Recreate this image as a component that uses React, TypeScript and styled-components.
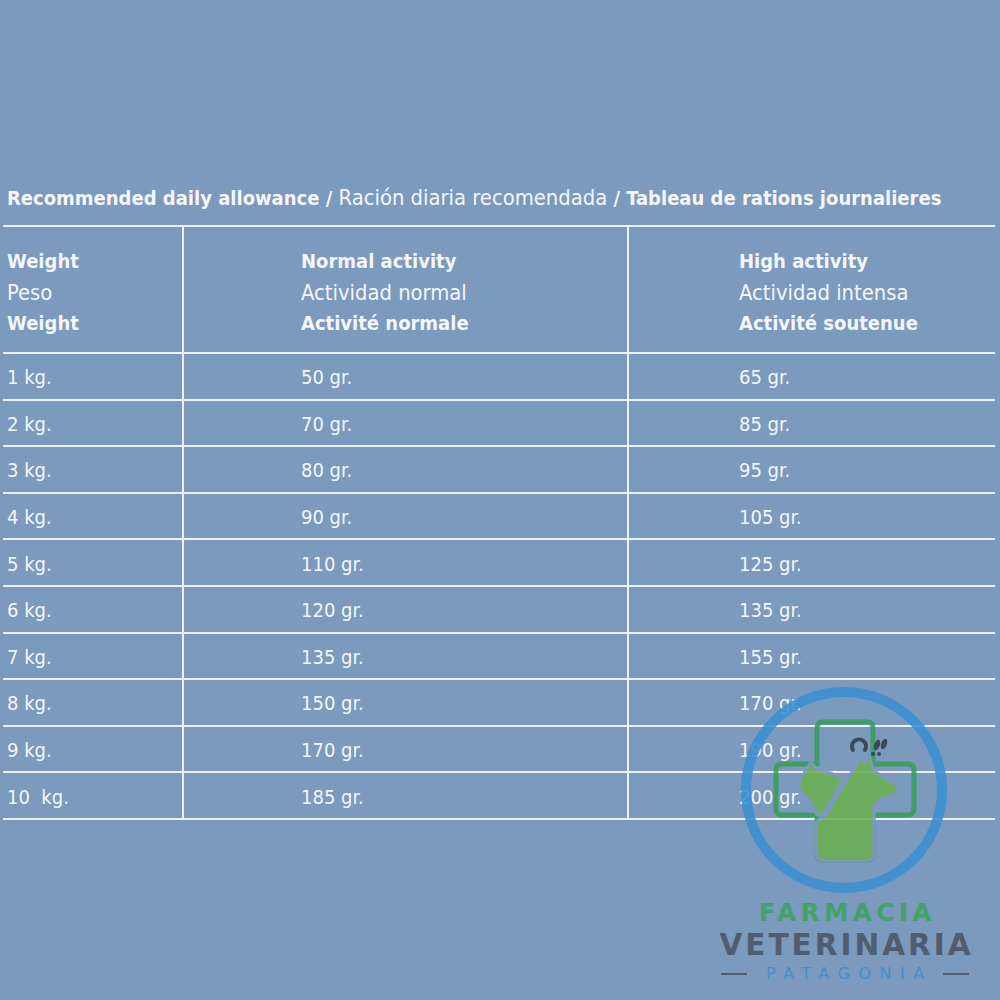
import React from 'react';
import styled, { createGlobalStyle } from 'styled-components';

const GlobalStyle = createGlobalStyle`
    html, body {
        margin: 0;
        padding: 0;
        background: #7c99be;
    }
`;

const textFont = `'Liberation Sans Narrow', 'DejaVu Sans Condensed', 'Liberation Sans', sans-serif`;
const lineColor = '#eef2f7';

const Page = styled.div`
    position: relative;
    width: 1000px;
    height: 1000px;
    box-sizing: border-box;
    padding-top: 183px;
    overflow: hidden;
    font-family: ${textFont};
    color: #f4f6f9;
`;

const Title = styled.div`
    padding-left: 7px;
    font-size: 20px;
    line-height: 30px;
    white-space: nowrap;
`;

const Strong = styled.span`
    font-weight: 700;
`;

const Light = styled.span`
    font-weight: 400;
    font-size: 21.8px;
`;

const Table = styled.div`
    display: grid;
    grid-template-columns: 181px 445px 366px;
    width: 992px;
    margin: 12px 0 0 3px;
    border-top: 2px solid ${lineColor};
`;

const Cell = styled.div<{ $pad: number; $last?: boolean; $head?: boolean }>`
    box-sizing: border-box;
    height: ${p => (p.$head ? '127px' : '46.6px')};
    padding-left: ${p => p.$pad}px;
    padding-top: ${p => (p.$head ? '19px' : '0')};
    display: flex;
    flex-direction: column;
    justify-content: ${p => (p.$head ? 'flex-start' : 'center')};
    border-bottom: 2px solid ${lineColor};
    border-right: ${p => (p.$last ? 'none' : `2px solid ${lineColor}`)};
    font-size: 20px;
    line-height: 31px;
    white-space: pre;
`;

const HeadLine = styled.span<{ $bold?: boolean }>`
    font-weight: ${p => (p.$bold ? 700 : 400)};
    font-size: ${p => (p.$bold ? '20px' : '21.8px')};
`;

const Value = styled.span`
    padding-top: 3px;
`;

const Logo = styled.div`
    position: absolute;
    left: 715px;
    top: 682px;
    width: 260px;
    display: flex;
    flex-direction: column;
    align-items: center;
    opacity: 0.88;
    font-family: 'DejaVu Sans', 'Inter', sans-serif;
    font-weight: 700;
`;

const Emblem = styled.svg`
    display: block;
    margin-left: -2px;
`;

const Farmacia = styled.div`
    margin-top: 1px;
    color: #3ba45d;
    font-size: 24.5px;
    line-height: 28px;
    letter-spacing: 4.5px;
    margin-right: -4.5px;
`;

const Veterinaria = styled.div`
    color: #4b5567;
    font-size: 29.5px;
    line-height: 37px;
    letter-spacing: 3px;
    margin-right: -3px;
    white-space: nowrap;
`;

const PatagoniaRow = styled.div`
    display: flex;
    align-items: center;
    gap: 19px;
    margin-top: -1px;
`;

const Dash = styled.span`
    width: 26px;
    height: 2px;
    background: #4b5567;
`;

const Patagonia = styled.span`
    color: #3e90d0;
    font-size: 16px;
    line-height: 22px;
    font-weight: 400;
    letter-spacing: 8.5px;
    margin-right: -8.5px;
`;

const header = [
    ['Weight', 'Peso', 'Weight'],
    ['Normal activity', 'Actividad normal', 'Activité normale'],
    ['High activity', 'Actividad intensa', 'Activité soutenue'],
];

const rows = [
    ['1 kg.', '50 gr.', '65 gr.'],
    ['2 kg.', '70 gr.', '85 gr.'],
    ['3 kg.', '80 gr.', '95 gr.'],
    ['4 kg.', '90 gr.', '105 gr.'],
    ['5 kg.', '110 gr.', '125 gr.'],
    ['6 kg.', '120 gr.', '135 gr.'],
    ['7 kg.', '135 gr.', '155 gr.'],
    ['8 kg.', '150 gr.', '170 gr.'],
    ['9 kg.', '170 gr.', '190 gr.'],
    ['10  kg.', '185 gr.', '200 gr.'],
];

const pads = [4, 117, 110];
const bg = '#7c99be';

const LogoEmblem = () => (
    <Emblem width="220" height="216" viewBox="0 0 220 216">
        <circle cx="110" cy="108" r="98" fill="none" stroke="#3b8fd1" strokeWidth="10" />
        <path
            d="M89 40 H133 Q139 40 139 46 V82 H174 Q180 82 180 88 V127 Q180 133 174 133 H139 V172 Q139 178 133 178 H89 Q83 178 83 172 V133 H48 Q42 133 42 127 V88 Q42 82 48 82 H83 V46 Q83 40 89 40 Z"
            fill="none"
            stroke="#3a9e5a"
            strokeWidth="5"
        />
        <g fill="#6cb050" stroke={bg} strokeWidth="3" strokeLinejoin="round">
            <path d="M77 80 L83 88 L97 91 L109 97 L89 133 L83 133 L77 121 L70 113 L64 105 L67 96 Z" />
            <path d="M117 91 L124 82 L126 72 L131 81 L135 72 L139 88 L151 96 L166 106 L160 113 L147 117 L140 123 L140 170 Q140 179 131 179 L91 179 Q82 179 82 170 L82 140 L91 135 Z" />
        </g>
        <path d="M119 68 A7 7 0 1 1 131 68" fill="none" stroke="#353d4a" strokeWidth="4" strokeLinecap="round" />
        <ellipse cx="143" cy="63" rx="2.8" ry="5.5" transform="rotate(20 143 63)" fill="#353d4a" />
        <ellipse cx="150" cy="62" rx="2.8" ry="5.5" transform="rotate(20 150 62)" fill="#353d4a" />
        <circle cx="139" cy="72" r="2" fill="#353d4a" />
        <circle cx="145" cy="72" r="2" fill="#353d4a" />
    </Emblem>
);

export default function App() {
    return (
        <Page>
            <GlobalStyle />
            <Title>
                <Strong>Recommended daily allowance / </Strong>
                <Light>Ración diaria recomendada </Light>
                <Strong>/ Tableau de rations journalieres</Strong>
            </Title>
            <Table>
                {header.map((lines, i) => (
                    <Cell key={`h${i}`} $head $pad={pads[i]} $last={i === 2}>
                        <HeadLine $bold>{lines[0]}</HeadLine>
                        <HeadLine>{lines[1]}</HeadLine>
                        <HeadLine $bold>{lines[2]}</HeadLine>
                    </Cell>
                ))}
                {rows.map((row, r) =>
                    row.map((value, i) => (
                        <Cell key={`${r}-${i}`} $pad={pads[i]} $last={i === 2}>
                            <Value>{value}</Value>
                        </Cell>
                    )),
                )}
            </Table>
            <Logo>
                <LogoEmblem />
                <Farmacia>FARMACIA</Farmacia>
                <Veterinaria>VETERINARIA</Veterinaria>
                <PatagoniaRow>
                    <Dash />
                    <Patagonia>PATAGONIA</Patagonia>
                    <Dash />
                </PatagoniaRow>
            </Logo>
        </Page>
    );
}
